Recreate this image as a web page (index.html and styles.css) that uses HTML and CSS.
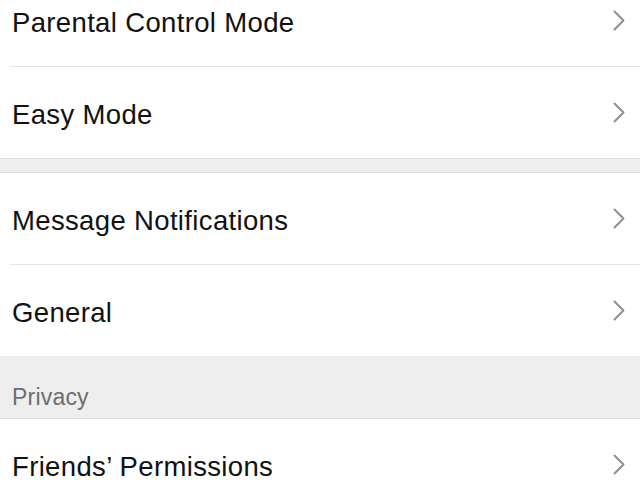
FILE: index.html
```html
<!DOCTYPE html>
<html lang="en">
<head>
	<meta charset="UTF-8">
	<title>Settings</title>
	<link rel="stylesheet" href="styles.css">
</head>
<body>
	<div class="settings">
		<ul class="group first">
			<li class="row"><span class="label">Parental Control Mode</span><svg class="chevron" viewBox="0 0 12 21"><path d="M1.5 1.5L10.5 10.5L1.5 19.5"/></svg></li>
			<li class="row"><span class="label">Easy Mode</span><svg class="chevron" viewBox="0 0 12 21"><path d="M1.5 1.5L10.5 10.5L1.5 19.5"/></svg></li>
		</ul>
		<div class="gap"></div>
		<ul class="group">
			<li class="row"><span class="label">Message Notifications</span><svg class="chevron" viewBox="0 0 12 21"><path d="M1.5 1.5L10.5 10.5L1.5 19.5"/></svg></li>
			<li class="row"><span class="label">General</span><svg class="chevron" viewBox="0 0 12 21"><path d="M1.5 1.5L10.5 10.5L1.5 19.5"/></svg></li>
		</ul>
		<div class="section-title">Privacy</div>
		<ul class="group">
			<li class="row"><span class="label">Friends’ Permissions</span><svg class="chevron" viewBox="0 0 12 21"><path d="M1.5 1.5L10.5 10.5L1.5 19.5"/></svg></li>
		</ul>
	</div>
</body>
</html>
```

FILE: styles.css
```css
* { padding: 0; margin: 0; box-sizing: border-box; }
li { list-style: none; }
body { background: #fff; font-family: "Liberation Sans", Arial, sans-serif; color: #111; overflow: hidden; }

.settings { width: 640px; }
.group { background: #fff; }
.group.first { margin-top: -25px; }

.row { display: flex; align-items: center; justify-content: space-between; height: 92px; margin-left: 10px; padding: 4px 15px 0 2px; border-bottom: 1px solid #e4e4e4; }
.row:last-child { height: 91px; border-bottom: none; }
.label { font-size: 27.5px; letter-spacing: 0.35px; }

.chevron { width: 12px; height: 21px; flex: none; margin-top: -4px; }
.chevron path { fill: none; stroke: #8e8e93; stroke-width: 2; stroke-linecap: round; stroke-linejoin: round; }

.gap { height: 15px; background: #eeeeee; border-top: 1px solid #dcdcdc; border-bottom: 1px solid #dcdcdc; }

.section-title { height: 63px; display: flex; align-items: flex-end; padding: 0 0 7px 12px; background: #eeeeee; border-bottom: 1px solid #dedede; font-size: 23px; letter-spacing: 0.2px; color: #6d6d72; }
```
